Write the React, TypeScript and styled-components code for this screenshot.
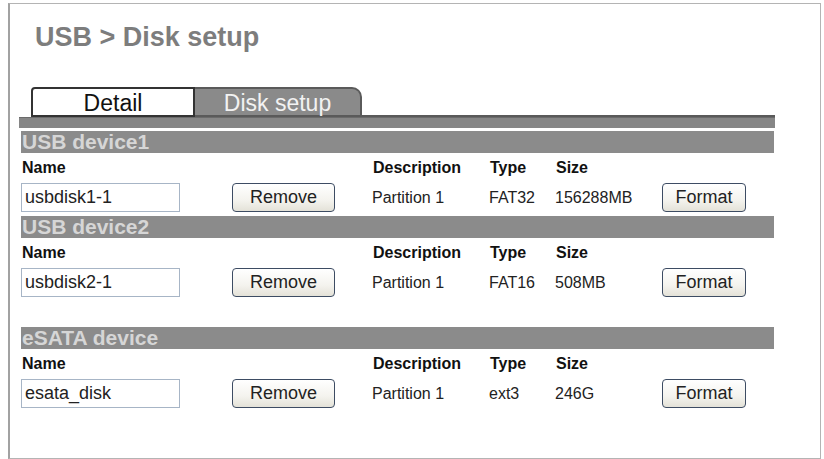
import React from "react";
import styled, { createGlobalStyle } from "styled-components";

interface Partition {
  name: string;
  description: string;
  type: string;
  size: string;
}

interface Device {
  title: string;
  partition: Partition;
  gapAfter: number;
}

const devices: Device[] = [
  {
    title: "USB device1",
    partition: { name: "usbdisk1-1", description: "Partition 1", type: "FAT32", size: "156288MB" },
    gapAfter: 4,
  },
  {
    title: "USB device2",
    partition: { name: "usbdisk2-1", description: "Partition 1", type: "FAT16", size: "508MB" },
    gapAfter: 30,
  },
  {
    title: "eSATA device",
    partition: { name: "esata_disk", description: "Partition 1", type: "ext3", size: "246G" },
    gapAfter: 0,
  },
];

const GlobalStyle = createGlobalStyle`
  html, body {
    margin: 0;
    padding: 0;
    background: #fff;
  }
  body {
    font-family: "Liberation Sans", Arial, sans-serif;
    color: #111;
  }
`;

const Frame = styled.div`
  box-sizing: border-box;
  margin: 3px 0 0 8px;
  width: 813px;
  height: 456px;
  border: 1px solid #b4b4b4;
  border-left: 2px solid #a2a2a2;
`;

const Title = styled.h1`
  margin: 20px 0 0 25px;
  font-size: 27px;
  line-height: 27px;
  font-weight: bold;
  color: #7d7d7d;
`;

const Panel = styled.div`
  margin: 36px 0 0 9px;
  width: 756px;
`;

const TabBar = styled.div`
  display: flex;
  align-items: flex-end;
  height: 30px;
  padding-left: 12px;
`;

const Tab = styled.div<{ $active?: boolean }>`
  box-sizing: border-box;
  display: flex;
  align-items: center;
  justify-content: center;
  height: 30px;
  font-size: 23px;
  line-height: 1;
  padding-top: 2px;
  ${(p) =>
    p.$active
      ? `
    width: 167px;
    background: #8a8a8a;
    color: #f2f2f2;
    border-top: 2px solid #5a5a5a;
    border-right: 2px solid #5a5a5a;
    border-bottom: 2px solid #5a5a5a;
    border-radius: 0 10px 0 0;
  `
      : `
    width: 164px;
    background: #fff;
    color: #111;
    border: 2px solid #333;
    border-radius: 4px 0 0 0;
  `}
`;

const TabFiller = styled.div`
  flex: 1;
  height: 30px;
  box-sizing: border-box;
  border-bottom: 2px solid #5a5a5a;
`;

const Strip = styled.div`
  height: 11px;
  margin-bottom: 3px;
  background: #868686;
  border-top: 1px solid #6a6a6a;
  box-sizing: border-box;
`;

const Section = styled.section<{ $gap: number }>`
  margin-bottom: ${(p) => p.$gap}px;
`;

const SectionHeader = styled.div`
  height: 22px;
  margin: 0 1px 0 2px;
  padding-left: 1px;
  background: #8b8b8b;
  color: #d6d6d6;
  font-size: 21px;
  line-height: 22px;
  font-weight: bold;
`;

const Grid = styled.div`
  display: grid;
  grid-template-columns: 211px 140px 117px 66px 107px 84px;
  grid-template-rows: 30px 29px;
  padding-left: 2px;
  align-items: center;
`;

const Label = styled.div`
  padding-left: 1px;
  font-size: 16px;
  line-height: 30px;
  font-weight: bold;
  color: #111;
`;

const Cell = styled.div`
  font-size: 16px;
  line-height: 29px;
  color: #222;
`;

const NameInput = styled.input`
  box-sizing: border-box;
  width: 159px;
  height: 29px;
  margin: 0;
  padding: 0 0 0 3px;
  border: 1px solid #a7b5c6;
  font-family: "Liberation Sans", Arial, sans-serif;
  font-size: 18px;
  color: #222;
  background: #fff;
  outline: none;
`;

const Button = styled.button<{ $width: number }>`
  box-sizing: border-box;
  width: ${(p) => p.$width}px;
  height: 29px;
  margin: 0;
  padding: 0;
  border: 1px solid #3d4c63;
  border-radius: 4px;
  background: linear-gradient(180deg, #ffffff 0%, #f4f3ee 60%, #e4e2d8 100%);
  font-family: "Liberation Sans", Arial, sans-serif;
  font-size: 18px;
  color: #222;
`;

const DeviceSection = ({ device }: { device: Device }) => {
  const { partition } = device;
  return (
    <Section $gap={device.gapAfter}>
      <SectionHeader>{device.title}</SectionHeader>
      <Grid>
        <Label>Name</Label>
        <div />
        <Label>Description</Label>
        <Label>Type</Label>
        <Label>Size</Label>
        <div />
        <div>
          <NameInput defaultValue={partition.name} />
        </div>
        <div>
          <Button $width={103}>Remove</Button>
        </div>
        <Cell>{partition.description}</Cell>
        <Cell>{partition.type}</Cell>
        <Cell>{partition.size}</Cell>
        <div>
          <Button $width={84}>Format</Button>
        </div>
      </Grid>
    </Section>
  );
};

const App = () => {
  return (
    <>
      <GlobalStyle />
      <Frame>
        <Title>USB &gt; Disk setup</Title>
        <Panel>
          <TabBar>
            <Tab>Detail</Tab>
            <Tab $active>Disk setup</Tab>
            <TabFiller />
          </TabBar>
          <Strip />
          {devices.map((d) => (
            <DeviceSection key={d.title} device={d} />
          ))}
        </Panel>
      </Frame>
    </>
  );
};

export default App;
